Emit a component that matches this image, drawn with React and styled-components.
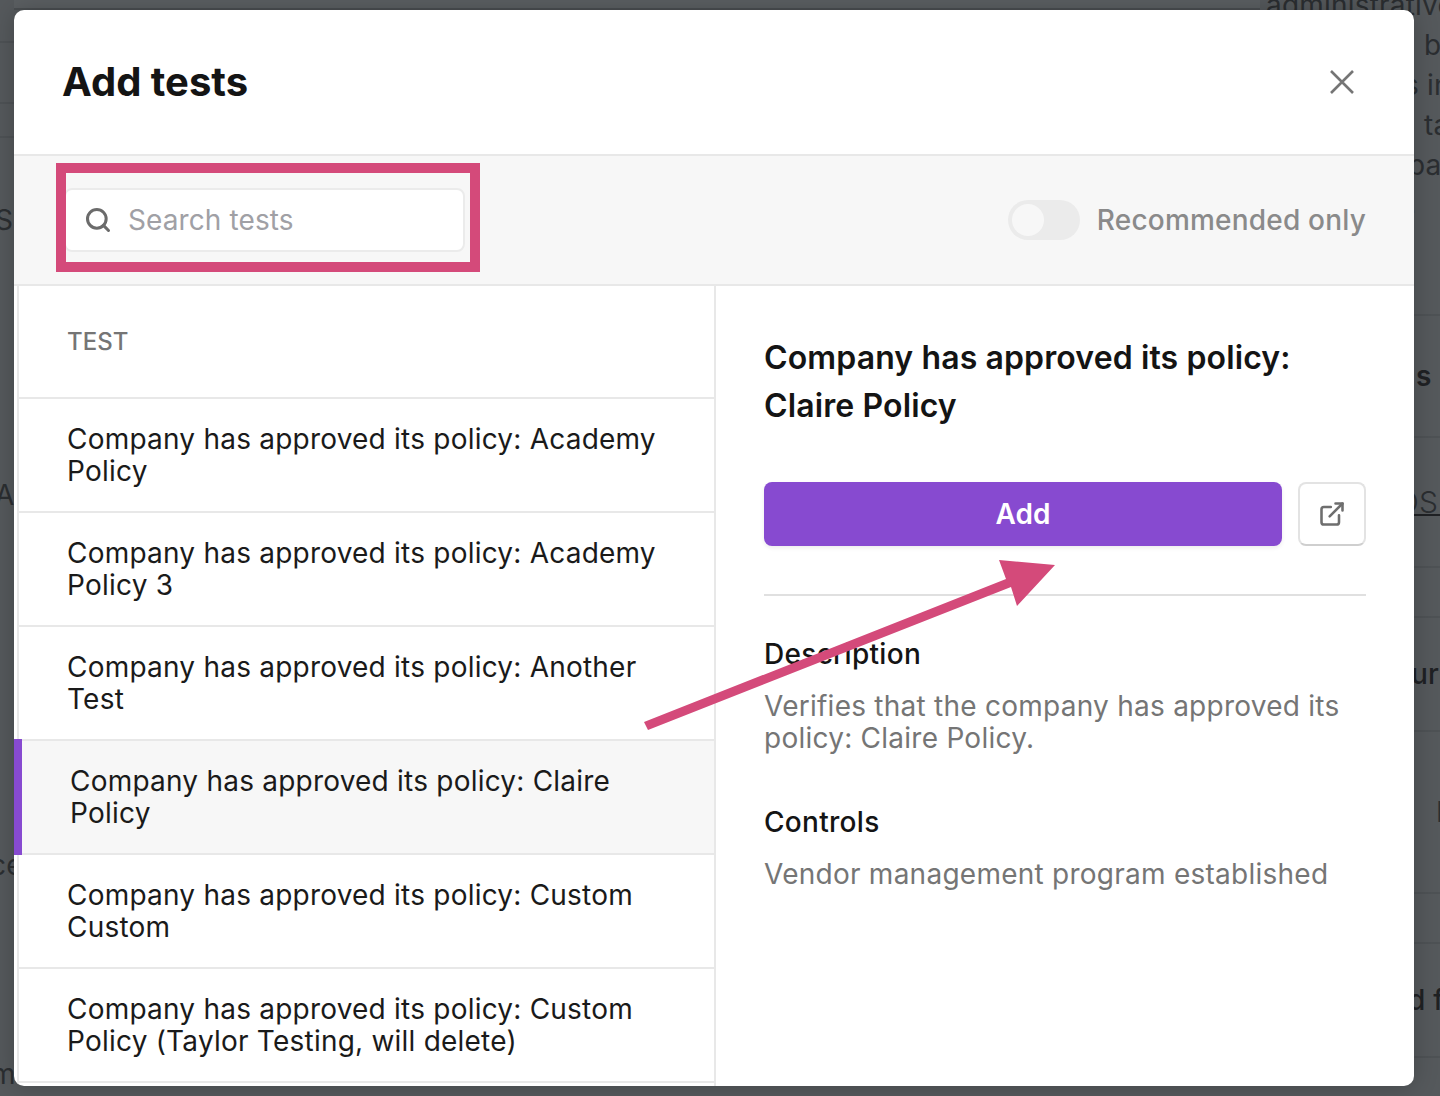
import React from "react";
import styled, { createGlobalStyle } from "styled-components";
import { Search, ExternalLink } from "lucide-react";

const Global = createGlobalStyle`
  html, body { margin: 0; padding: 0; background: #55595c; }
  * { box-sizing: border-box; }
  body { font-family: Inter, "Liberation Sans", sans-serif; }
`;

const Page = styled.div`
  position: relative;
  width: 1440px;
  height: 1096px;
  overflow: hidden;
  background: #55595c;
  display: flex;
`;

const SideLeft = styled.div`
  width: 14px;
  flex: none;
  overflow: hidden;
  display: flex;
  flex-direction: column;
`;

const SideCenter = styled.div`
  flex: 1;
  height: 10px;
  background: #5b5f62;
  border-bottom: 2px solid #4a4e51;
`;

const SideRight = styled.div`
  width: 180px;
  flex: none;
  overflow: hidden;
  display: flex;
  flex-direction: column;
  margin-top: -15px;
`;

const BackRow = styled.div`
  height: ${(p) => p.$h}px;
  flex: none;
  display: flex;
  align-items: center;
  white-space: nowrap;
  padding-left: ${(p) => p.$pad || 0}px;
  font-size: 28px;
  letter-spacing: 0.2px;
  font-weight: ${(p) => p.$weight || 400};
  color: ${(p) => p.$color || "#2b2e31"};
  border-bottom: ${(p) => (p.$line ? "2px solid #4e5255" : "0")};
`;

const ClippedText = styled.span`
  margin-left: ${(p) => p.$shift}px;
`;

const Under = styled.span`
  display: block;
  margin-top: -4px;
  padding-right: 40px;
  border-bottom: 2px solid #1f2124;
  font-size: 30px;
  font-weight: 300;
  line-height: 36px;
  height: 32px;
`;

const Modal = styled.div`
  position: absolute;
  left: 14px;
  top: 10px;
  width: 1400px;
  height: 1076px;
  background: #fff;
  border-radius: 10px;
  overflow: hidden;
  display: flex;
  flex-direction: column;
  box-shadow: 0 0 24px rgba(0, 0, 0, 0.22);
`;

const Header = styled.div`
  height: 144px;
  flex: none;
  display: flex;
  align-items: center;
  justify-content: space-between;
  padding: 0 58px 0 48px;
`;

const Title = styled.h1`
  margin: 0;
  font-size: 40px;
  line-height: 48px;
  font-weight: 700;
  color: #141414;
`;

const Close = styled.button`
  width: 28px;
  height: 28px;
  padding: 0;
  border: 0;
  background: none;
  display: block;
`;

const Toolbar = styled.div`
  height: 132px;
  flex: none;
  display: flex;
  align-items: center;
  justify-content: space-between;
  padding: 0 48px 0 50px;
  background: #f7f7f7;
  border-top: 2px solid #e8e8e8;
  border-bottom: 2px solid #e8e8e8;
`;

const SearchBox = styled.div`
  width: 401px;
  height: 64px;
  display: flex;
  align-items: center;
  gap: 16px;
  padding-left: 18px;
  background: #fff;
  border: 2px solid #ebebeb;
  border-radius: 8px;
  color: #6b6b6b;
`;

const Placeholder = styled.span`
  font-size: 28px;
  letter-spacing: 0.1px;
  color: #a0a0a5;
`;

const ToggleWrap = styled.div`
  display: flex;
  align-items: center;
  gap: 17px;
`;

const Toggle = styled.div`
  width: 72px;
  height: 40px;
  padding: 4px;
  border-radius: 20px;
  background: #ebebeb;
`;

const Thumb = styled.div`
  width: 32px;
  height: 32px;
  border-radius: 50%;
  background: #f7f7f7;
`;

const ToggleLabel = styled.span`
  font-size: 28px;
  font-weight: 500;
  letter-spacing: 0.2px;
  color: #8a8a8a;
`;

const Body = styled.div`
  flex: 1;
  min-height: 0;
  display: flex;
`;

const List = styled.div`
  width: 699px;
  margin-left: 3px;
  flex: none;
  border-left: 2px solid #e8e8e8;
  border-right: 2px solid #e8e8e8;
`;

const ListHead = styled.div`
  height: 113px;
  padding-left: 48px;
  display: flex;
  align-items: center;
  border-bottom: 2px solid #e8e8e8;
  font-size: 24px;
  font-weight: 500;
  color: #757575;
  text-transform: uppercase;
`;

const Row = styled.div`
  position: relative;
  height: 114px;
  display: flex;
  align-items: center;
  padding: 0 40px 0 ${(p) => (p.$active ? 56 : 48)}px;
  margin-left: ${(p) => (p.$active ? -5 : 0)}px;
  font-size: 28px;
  line-height: 32px;
  letter-spacing: 0.22px;
  color: #1a1a1a;
  background: ${(p) => (p.$active ? "#f7f7f7" : "#fff")};
  border-bottom: 2px solid #e8e8e8;
`;

const ActiveBar = styled.span`
  position: absolute;
  left: 0;
  top: -2px;
  bottom: -2px;
  width: 8px;
  background: #874ad0;
`;

const Detail = styled.div`
  flex: 1;
  padding: 48px 48px 0;
`;

const DetailTitle = styled.h2`
  margin: 0 0 52px;
  font-size: 32px;
  line-height: 48px;
  font-weight: 600;
  letter-spacing: 0.12px;
  color: #141414;
`;

const Actions = styled.div`
  display: flex;
  gap: 16px;
  padding-bottom: 48px;
  border-bottom: 2px solid #e0e0e0;
  margin-bottom: 42px;
`;

const AddButton = styled.button`
  flex: 1;
  height: 64px;
  border: 0;
  border-radius: 8px;
  background: #874ad0;
  color: #fff;
  font: 600 28px Inter, sans-serif;
  box-shadow: 0 2px 4px rgba(0, 0, 0, 0.08);
`;

const LinkButton = styled.button`
  width: 68px;
  height: 64px;
  padding: 0;
  display: flex;
  align-items: center;
  justify-content: center;
  border: 2px solid #e3e3e3;
  border-bottom-color: #cfcfcf;
  border-radius: 8px;
  background: #fff;
  color: #6e6e6e;
`;

const SectionHead = styled.h3`
  margin: 0 0 20px;
  font-size: 28px;
  line-height: 32px;
  font-weight: 500;
  letter-spacing: 0.3px;
  color: #141414;
`;

const SectionText = styled.p`
  margin: 0 0 52px;
  font-size: 28px;
  line-height: 32px;
  letter-spacing: 0.25px;
  color: #757575;
`;

const Callout = styled.div`
  position: absolute;
  left: 56px;
  top: 163px;
  width: 424px;
  height: 109px;
  border: 10px solid #d44a7a;
`;

const ArrowSvg = styled.svg`
  position: absolute;
  left: 0;
  top: 0;
  pointer-events: none;
`;

const rows = [
  "Company has approved its policy: Academy Policy",
  "Company has approved its policy: Academy Policy 3",
  "Company has approved its policy: Another Test",
  "Company has approved its policy: Claire Policy",
  "Company has approved its policy: Custom Custom",
  "Company has approved its policy: Custom Policy (Taylor Testing, will delete)",
];

export default function App() {
  return (
    <>
      <Global />
      <Page>
        <SideLeft>
          <BackRow $h={43} $line />
          <BackRow $h={61} $line />
          <BackRow $h={34} $line />
          <BackRow $h={164}><ClippedText $shift={-5}>S</ClippedText></BackRow>
          <BackRow $h={386}><ClippedText $shift={-5}>A</ClippedText></BackRow>
          <BackRow $h={354}><ClippedText $shift={-10}>ce</ClippedText></BackRow>
          <BackRow $h={64}><ClippedText $shift={-9}>m</ClippedText></BackRow>
        </SideLeft>
        <SideCenter />
        <SideRight>
          <BackRow $h={40} $pad={6}>administrative</BackRow>
          <BackRow $h={40} $pad={164}>b</BackRow>
          <BackRow $h={40} $pad={144}>s in</BackRow>
          <BackRow $h={40} $pad={164}>ta</BackRow>
          <BackRow $h={40} $pad={148}>pa</BackRow>
          <BackRow $h={50} $pad={139} $color="#3b2a80">e</BackRow>
          <BackRow $h={81} $line />
          <BackRow $h={122} $pad={156} $weight={600} $color="#1f2124" $line>s</BackRow>
          <BackRow $h={130} $pad={136} $line><Under>OS</Under></BackRow>
          <BackRow $h={50} $line />
          <BackRow $h={114} $pad={151} $weight={500} $color="#1f2124" $line>ur</BackRow>
          <BackRow $h={162} $pad={176} $line>N</BackRow>
          <BackRow $h={50} $line />
          <BackRow $h={114} $pad={148} $weight={500} $color="#1f2124" $line>d f</BackRow>
        </SideRight>
        <Modal>
          <Header>
            <Title>Add tests</Title>
            <Close aria-label="Close">
              <svg width="28" height="28" viewBox="0 0 28 28" fill="none" stroke="#757575" strokeWidth="2.6">
                <path d="M3 3 L25 25 M25 3 L3 25" />
              </svg>
            </Close>
          </Header>
          <Toolbar>
            <SearchBox>
              <Search size={28} strokeWidth={2.6} />
              <Placeholder>Search tests</Placeholder>
            </SearchBox>
            <ToggleWrap>
              <Toggle><Thumb /></Toggle>
              <ToggleLabel>Recommended only</ToggleLabel>
            </ToggleWrap>
          </Toolbar>
          <Body>
            <List>
              <ListHead>Test</ListHead>
              {rows.map((r, i) => (
                <Row key={r} $active={i === 3}>
                  {i === 3 && <ActiveBar />}
                  {r}
                </Row>
              ))}
            </List>
            <Detail>
              <DetailTitle>Company has approved its policy: Claire Policy</DetailTitle>
              <Actions>
                <AddButton>Add</AddButton>
                <LinkButton aria-label="Open"><ExternalLink size={28} strokeWidth={2.2} /></LinkButton>
              </Actions>
              <SectionHead>Description</SectionHead>
              <SectionText>Verifies that the company has approved its policy: Claire Policy.</SectionText>
              <SectionHead>Controls</SectionHead>
              <SectionText>Vendor management program established</SectionText>
            </Detail>
          </Body>
        </Modal>
        <Callout />
        <ArrowSvg width="1440" height="1096" viewBox="0 0 1440 1096">
          <path d="M644 722 L1006 579 L999 560 L1055 565 L1017 606 L1011 587 L648 730 Z" fill="#d44a7a" />
        </ArrowSvg>
      </Page>
    </>
  );
}
